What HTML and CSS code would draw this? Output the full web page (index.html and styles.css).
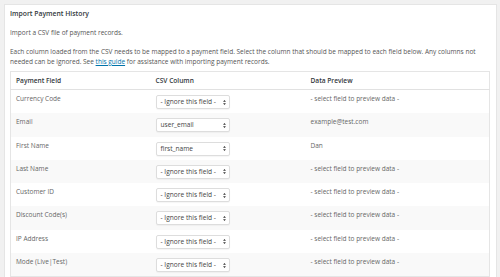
FILE: index.html
```html
<!DOCTYPE html>
<html lang="en">
<head>
  <meta charset="UTF-8">
  <title>Import Payment History</title>
  <link rel="stylesheet" href="styles.css">
</head>
<body>
  <div class="postbox">
    <h3 class="hndle">Import Payment History</h3>
    <div class="inside">
      <p>Import a CSV file of payment records.</p>
      <p>Each column loaded from the CSV needs to be mapped to a payment field. Select the column that should be mapped to each field below. Any columns not needed can be ignored. See <a href="#">this guide</a> for assistance with importing payment records.</p>
      <table class="map-table">
        <thead>
          <tr>
            <th>Payment Field</th>
            <th>CSV Column</th>
            <th>Data Preview</th>
          </tr>
        </thead>
        <tbody>
          <tr>
            <td>Currency Code</td>
            <td><span class="select">- Ignore this field -<svg viewBox="0 0 4 7"><path d="M2 0L4 2.6H0zM2 7L0 4.4h4z"/></svg></span></td>
            <td>- select field to preview data -</td>
          </tr>
          <tr>
            <td>Email</td>
            <td><span class="select">user_email<svg viewBox="0 0 4 7"><path d="M2 0L4 2.6H0zM2 7L0 4.4h4z"/></svg></span></td>
            <td>example@test.com</td>
          </tr>
          <tr>
            <td>First Name</td>
            <td><span class="select">first_name<svg viewBox="0 0 4 7"><path d="M2 0L4 2.6H0zM2 7L0 4.4h4z"/></svg></span></td>
            <td>Dan</td>
          </tr>
          <tr>
            <td>Last Name</td>
            <td><span class="select">- Ignore this field -<svg viewBox="0 0 4 7"><path d="M2 0L4 2.6H0zM2 7L0 4.4h4z"/></svg></span></td>
            <td>- select field to preview data -</td>
          </tr>
          <tr>
            <td>Customer ID</td>
            <td><span class="select">- Ignore this field -<svg viewBox="0 0 4 7"><path d="M2 0L4 2.6H0zM2 7L0 4.4h4z"/></svg></span></td>
            <td>- select field to preview data -</td>
          </tr>
          <tr>
            <td>Discount Code(s)</td>
            <td><span class="select">- Ignore this field -<svg viewBox="0 0 4 7"><path d="M2 0L4 2.6H0zM2 7L0 4.4h4z"/></svg></span></td>
            <td>- select field to preview data -</td>
          </tr>
          <tr>
            <td>IP Address</td>
            <td><span class="select">- Ignore this field -<svg viewBox="0 0 4 7"><path d="M2 0L4 2.6H0zM2 7L0 4.4h4z"/></svg></span></td>
            <td>- select field to preview data -</td>
          </tr>
          <tr>
            <td>Mode (Live|Test)</td>
            <td><span class="select">- Ignore this field -<svg viewBox="0 0 4 7"><path d="M2 0L4 2.6H0zM2 7L0 4.4h4z"/></svg></span></td>
            <td>- select field to preview data -</td>
          </tr>
        </tbody>
      </table>
    </div>
  </div>
</body>
</html>
```

FILE: styles.css
```css
/* General */
* {
  margin: 0;
  padding: 0;
  box-sizing: border-box;
}

body {
  background-color: #f1f1f1;
  color: #555;
  font-family: "Open Sans", sans-serif;
  font-size: 6.5px;
  line-height: 1.5;
  padding: 4px 3px 0 4px;
  overflow: hidden;
}

.postbox {
  background-color: #fff;
  border: 1px solid #e5e5e5;
  min-height: 300px;
}

.hndle {
  font-size: 6.8px;
  font-weight: 600;
  color: #32373c;
  padding: 4px 5px 5px;
}

.inside {
  padding: 4px 5px 0;
}

.inside p {
  margin-bottom: 9px;
}

.inside p:last-of-type {
  margin-bottom: 5px;
}

.inside a {
  color: #0073aa;
}

/* Mapping table */
.map-table {
  width: 480px;
  border: 1px solid #e5e5e5;
  border-collapse: collapse;
}

.map-table th {
  font-weight: 600;
  color: #32373c;
  text-align: left;
  padding: 4px 5px 3px;
  height: 18px;
  border-bottom: 1px solid #e1e1e1;
  font-size: 6.6px;
}

.map-table td {
  height: 23.3px;
  padding: 4px 5px 0;
  color: #666;
  vertical-align: top;
}

.map-table th:nth-child(1),
.map-table td:nth-child(1) {
  width: 140px;
}

.map-table th:nth-child(2),
.map-table td:nth-child(2) {
  width: 155px;
}

.map-table tbody tr:nth-child(even) {
  background-color: #f9f9f9;
}

.map-table td:nth-child(2) {
  padding-top: 5px;
}

.select {
  display: flex;
  align-items: center;
  justify-content: space-between;
  width: 74px;
  height: 14px;
  padding: 0 3px 0 4px;
  border: 1px solid #ddd;
  border-radius: 2px;
  background-color: #fff;
  color: #444;
  box-shadow: 0 1px 1px rgba(0, 0, 0, 0.04);
  font-size: 6.6px;
}

.select svg {
  width: 3px;
  height: 5px;
  fill: #333;
}
```
